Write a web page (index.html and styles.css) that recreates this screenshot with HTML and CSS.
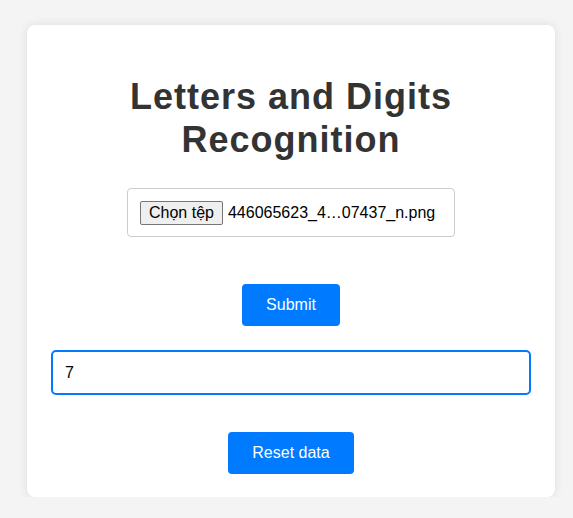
FILE: index.html
```html
<!DOCTYPE html>
<html lang="vi">
<head>
<meta charset="utf-8">
<title>Letters and Digits Recognition</title>
<link rel="stylesheet" href="styles.css">
</head>
<body>
<main class="card">
  <h1 class="title">Letters and Digits Recognition</h1>
  <form class="upload">
    <div class="file-box">
      <span class="file-btn">Chọn tệp</span>
      <span class="file-name">446065623_4…07437_n.png</span>
    </div>
    <button type="button" class="btn btn-submit">Submit</button>
  </form>
  <input class="result" type="text" value="7">
  <button type="button" class="btn btn-reset">Reset data</button>
</main>
</body>
</html>
```
FILE: styles.css
```css
* { box-sizing: border-box; }
html, body { margin: 0; padding: 0; }
body {
  background: #f4f4f4;
  font-family: "Liberation Sans", Arial, sans-serif;
  color: #333;
  padding-top: 25px;
}
.card {
  width: 528px;
  margin-left: 27px;
  background: #fff;
  border-radius: 8px;
  box-shadow: 0 0 10px rgba(0,0,0,0.1);
  padding: 24px 24px 23px;
  display: flex;
  flex-direction: column;
  align-items: center;
}
.title {
  font-size: 36px;
  line-height: 43.2px;
  font-weight: bold;
  letter-spacing: 1px;
  text-align: center;
  color: #333;
  margin: 26px 0 0;
}
.upload {
  display: flex;
  flex-direction: column;
  align-items: center;
  margin-top: 27px;
}
.file-box {
  width: 328px;
  height: 49px;
  border: 1px solid #ccc;
  border-radius: 4px;
  padding: 0 12px;
  display: flex;
  align-items: center;
  gap: 5px;
  font-size: 16px;
  color: #000;
}
.file-btn {
  display: inline-block;
  height: 24px;
  line-height: 22px;
  padding: 0 8px;
  border: 1px solid #767676;
  border-radius: 2px;
  background: #efefef;
  color: #000;
  font-size: 16px;
  white-space: nowrap;
}
.file-name { white-space: nowrap; }
.btn {
  border: none;
  background: #007bff;
  color: #fff;
  font-family: "Liberation Sans", Arial, sans-serif;
  font-size: 16px;
  line-height: 18px;
  padding: 12px 24px;
  border-radius: 4px;
  cursor: pointer;
}
.btn-submit { margin-top: 47px; }
.result {
  width: 480px;
  height: 45px;
  margin-top: 24px;
  border: 2px solid #007bff;
  border-radius: 5px;
  padding: 0 12px;
  font-family: "Liberation Sans", Arial, sans-serif;
  font-size: 16px;
  color: #000;
  outline: none;
}
.btn-reset { margin-top: 37px; }
```
